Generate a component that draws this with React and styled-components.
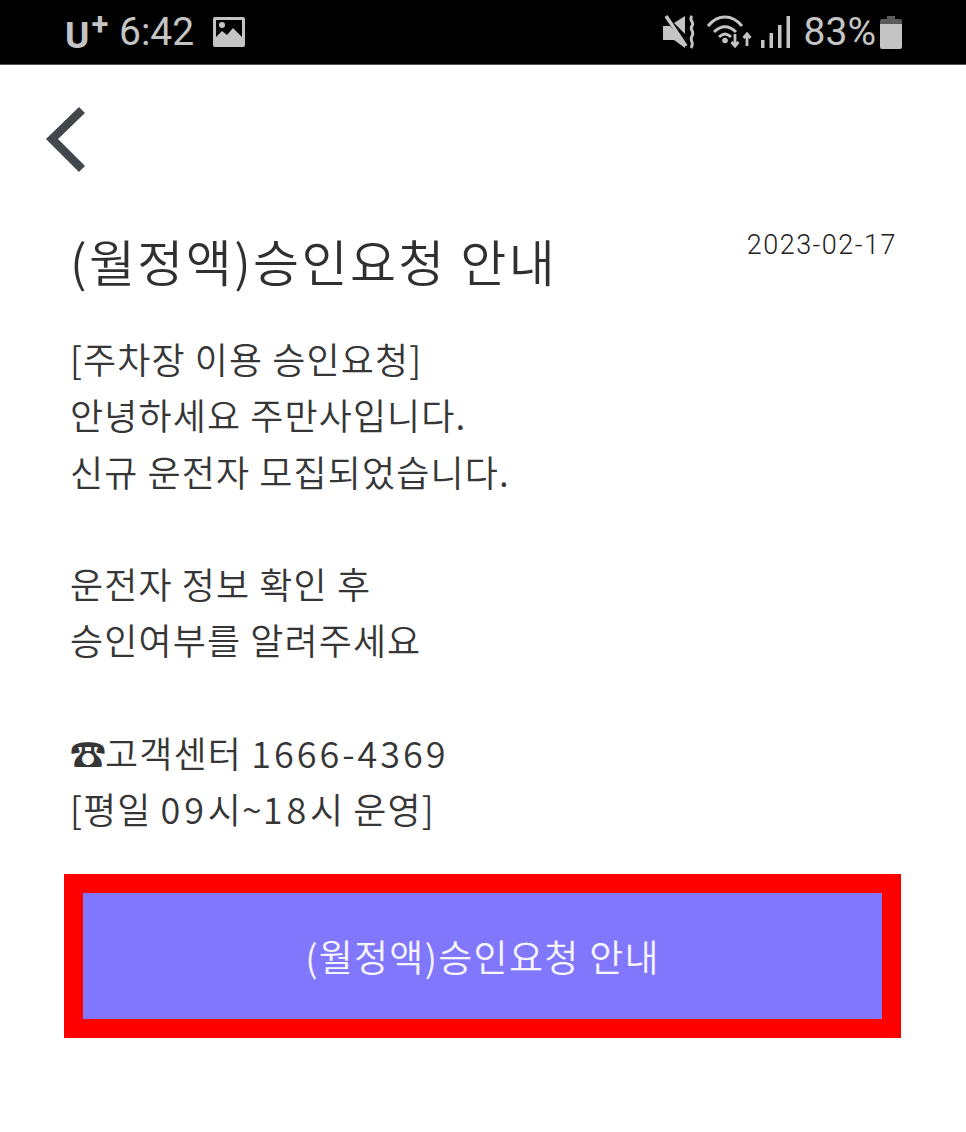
import React from 'react';
import styled, { createGlobalStyle } from 'styled-components';

const GlobalStyle = createGlobalStyle`
  html, body {
    margin: 0;
    padding: 0;
    background: #fff;
  }
  body {
    font-family: "Noto Sans CJK KR", "Noto Sans", sans-serif;
  }
`;

const Page = styled.div`
  width: 966px;
  height: 1132px;
  overflow: hidden;
  background: #fff;
`;

const StatusBar = styled.div`
  height: 65px;
  background: #000;
  color: #c4c4c4;
  display: flex;
  align-items: center;
  justify-content: space-between;
  padding: 0 64px 0 65px;
  font-family: Roboto, "Noto Sans", sans-serif;
  font-size: 39px;
  border-bottom: 1px solid #555;
  box-sizing: border-box;
`;

const StatusGroup = styled.div`
  display: flex;
  align-items: center;
`;

const Carrier = styled.span`
  display: flex;
  align-items: flex-start;
  width: 54px;
  font-weight: 700;
  font-size: 37px;
  line-height: 1;
  position: relative;
  top: 3px;
  span {
    font-size: 31px;
    line-height: 1;
    margin: -8px 0 0 2px;
  }
`;

const Clock = styled.span`
  margin-right: 19px;
  font-weight: 400;
`;

const Percent = styled.span`
  margin: 0 4px 0 14px;
  letter-spacing: 0;
`;

const BackRow = styled.div`
  height: 149px;
  padding: 41px 0 0 45px;
  box-sizing: border-box;
`;

const Content = styled.div`
  padding: 0 69px 0 70px;
`;

const TitleRow = styled.div`
  display: flex;
  justify-content: space-between;
  align-items: flex-start;
`;

const Title = styled.h1`
  margin: 8px 0 0;
  font-size: 50px;
  line-height: 76px;
  font-weight: 350;
  color: #303030;
  letter-spacing: 2.4px;
`;

const DateText = styled.div`
  font-family: Roboto, sans-serif;
  font-size: 27px;
  font-weight: 300;
  line-height: 30px;
  letter-spacing: 1.5px;
  color: #222;
  padding-top: 16px;
`;

const Message = styled.div`
  margin-top: 32px;
  font-size: 36px;
  line-height: 56.25px;
  font-weight: 350;
  color: #363636;
  letter-spacing: 1.1px;
`;

const Line = styled.div`
  min-height: 56.25px;
`;

const Num = styled.span`
  letter-spacing: ${(p) => (p.$wide ? 3.8 : 3)}px;
`;

const PhoneMark = styled.span`
  margin-right: -2px;
`;

const ButtonFrame = styled.div`
  margin: 38px 0 0 -6px;
  width: 837px;
  border: 19px solid #ff0000;
  box-sizing: border-box;
`;

const ActionButton = styled.button`
  display: block;
  width: 100%;
  height: 126px;
  border: 0;
  padding: 0;
  background: #8177fd;
  color: #f6f5ff;
  font-family: inherit;
  font-size: 37px;
  font-weight: 350;
  letter-spacing: 1.3px;
`;

const Glyph = styled.svg`
  display: block;
  flex: none;
  margin-right: ${(p) => p.$gap || 0}px;
`;

const GalleryIcon = () => (
  <Glyph width="32" height="30" viewBox="0 0 32 30">
    <path fill="#c4c4c4" fillRule="evenodd" d="M2 0h28a2 2 0 0 1 2 2v26a2 2 0 0 1-2 2H2a2 2 0 0 1-2-2V2a2 2 0 0 1 2-2zm1 3v17l6-6 5 4 6-7 9 9V3z" />
    <circle cx="9" cy="8" r="3" fill="#c4c4c4" />
  </Glyph>
);

const MuteIcon = () => (
  <Glyph width="34" height="34" viewBox="0 0 34 34" $gap={11}>
    <path fill="#c4c4c4" d="M1 11h7l15 17v5L12 25H1z" />
    <path fill="#c4c4c4" d="M12 8l11-7v18z" />
    <path d="M4 1l20 30" stroke="#c4c4c4" strokeWidth="3.500" />
    <path d="M30 1c-4 4 3 6 0 10s3 5 0 10 3 6-1 12" fill="none" stroke="#c4c4c4" strokeWidth="3" />
  </Glyph>
);

const WifiIcon = () => (
  <Glyph width="46" height="34" viewBox="0 0 46 34" $gap={8}>
    <g fill="none" stroke="#c4c4c4" strokeWidth="3">
      <path d="M1 11c10-12 24-12 34 0" />
      <path d="M7 17c7-7 15-7 22 0" />
      <path d="M12 22c4-4 8-4 12 0" />
    </g>
    <circle cx="18" cy="25.500" r="2.800" fill="#c4c4c4" />
    <path d="M28 19v12M24.500 27l3.500 4 3.500-4M40 31V19M36.500 23l3.500-4 3.500 4" fill="none" stroke="#c4c4c4" strokeWidth="2.800" />
  </Glyph>
);

const SignalIcon = () => (
  <Glyph width="29" height="32" viewBox="0 0 29 32">
    <rect x="0" y="24" width="3.500" height="8" fill="#c4c4c4" />
    <rect x="8.500" y="17" width="3.500" height="15" fill="#c4c4c4" />
    <rect x="17" y="9" width="3.500" height="23" fill="#c4c4c4" />
    <rect x="25.500" y="0" width="3.500" height="32" fill="#c4c4c4" />
  </Glyph>
);

const BatteryIcon = () => (
  <Glyph width="22" height="33" viewBox="0 0 22 33">
    <path fill="#5a5a5a" d="M7 0h8v3h5a2 2 0 0 1 2 2v4H0V5a2 2 0 0 1 2-2h5z" />
    <path fill="#c4c4c4" d="M0 8h22v23a2 2 0 0 1-2 2H2a2 2 0 0 1-2-2z" />
  </Glyph>
);

const BackIcon = () => (
  <Glyph width="44" height="68" viewBox="0 0 44 68">
    <path d="M37 4L7 33l30 30" fill="none" stroke="#42474d" strokeWidth="8.500" />
  </Glyph>
);

export default function App() {
  return (
    <>
      <GlobalStyle />
      <Page>
        <StatusBar>
          <StatusGroup>
            <Carrier>U<span>+</span></Carrier>
            <Clock>6:42</Clock>
            <GalleryIcon />
          </StatusGroup>
          <StatusGroup>
            <MuteIcon />
            <WifiIcon />
            <SignalIcon />
            <Percent>83%</Percent>
            <BatteryIcon />
          </StatusGroup>
        </StatusBar>
        <BackRow>
          <BackIcon />
        </BackRow>
        <Content>
          <TitleRow>
            <Title>(월정액)승인요청 안내</Title>
            <DateText>2023-02-17</DateText>
          </TitleRow>
          <Message>
            <Line>[주차장 이용 승인요청]</Line>
            <Line>안녕하세요 주만사입니다.</Line>
            <Line>신규 운전자 모집되었습니다.</Line>
            <Line />
            <Line>운전자 정보 확인 후</Line>
            <Line>승인여부를 알려주세요</Line>
            <Line />
            <Line><PhoneMark>☎</PhoneMark>고객센터 <Num>1666-4369</Num></Line>
            <Line>[평일 <Num $wide>09</Num>시~<Num $wide>18</Num>시 운영]</Line>
          </Message>
          <ButtonFrame>
            <ActionButton>(월정액)승인요청 안내</ActionButton>
          </ButtonFrame>
        </Content>
      </Page>
    </>
  );
}
